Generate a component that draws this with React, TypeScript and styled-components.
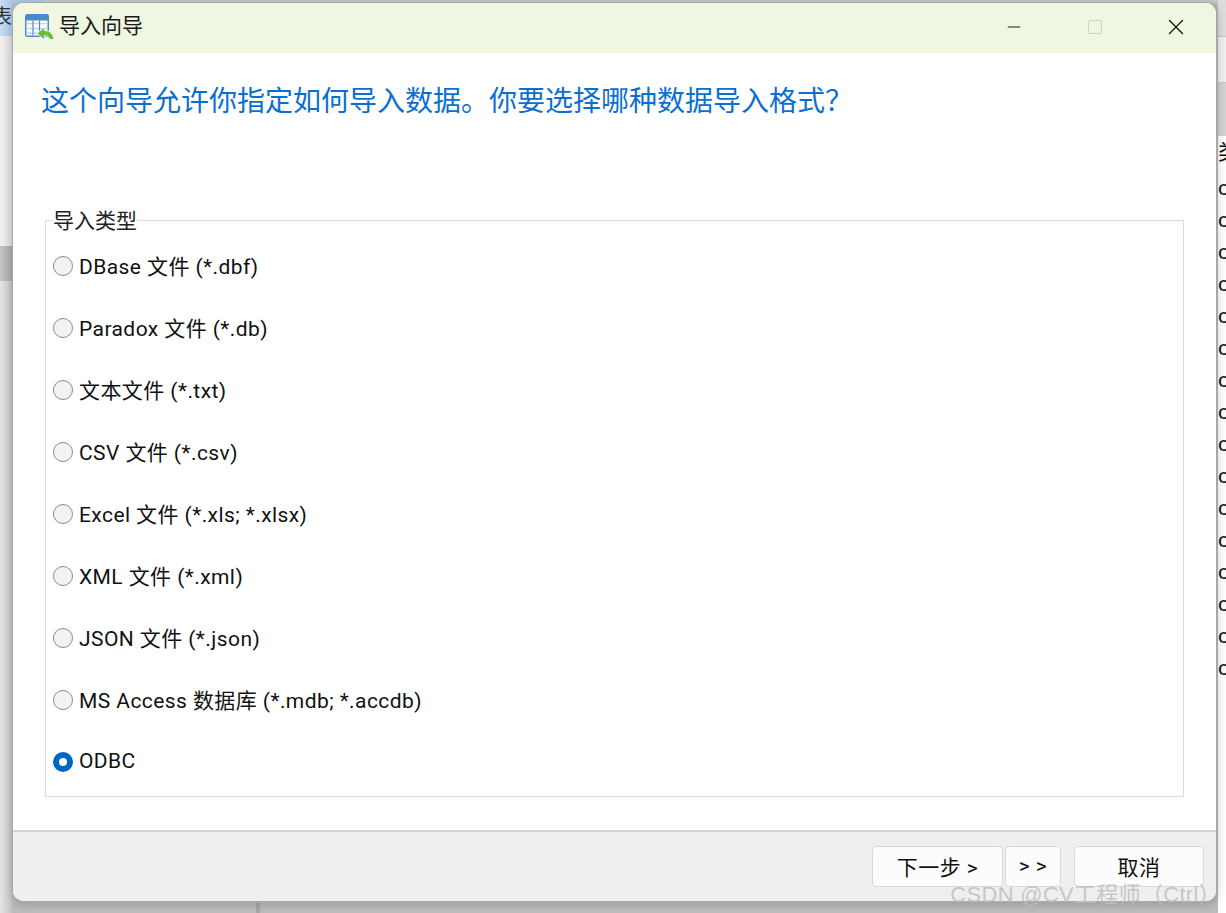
import styled, { createGlobalStyle } from "styled-components";
import { X, Minus } from "lucide-react";

const GlobalStyle = createGlobalStyle`
  html, body {
    margin: 0;
    padding: 0;
    height: 100%;
    overflow: hidden;
  }
  body {
    font-family: Roboto, "Noto Sans CJK SC", sans-serif;
    background: #d4d4d4;
  }
`;

const Desktop = styled.div`
  position: relative;
  width: 1226px;
  height: 913px;
  display: grid;
  grid-template-columns: 12px 1206px 8px;
  overflow: hidden;
  background:
    linear-gradient(#a8a8a8, #a8a8a8) 256px bottom / 4px 10px no-repeat,
    linear-gradient(90deg, #a9c9e8 44px, #c8c8c8 44px) top / 100% 3px no-repeat,
    #bcbcbc;
`;

const LeftStrip = styled.div`
  display: flex;
  flex-direction: column;
  background: #e2e2e2;
`;

const LeftTab = styled.div`
  height: 36px;
  background: linear-gradient(90deg, #c6dcf2, #a9c9e8);
  font-size: 20px;
  color: #333;
  overflow: hidden;
  direction: rtl;
  line-height: 34px;
`;

const LeftGap = styled.div`
  height: 210px;
  background: linear-gradient(90deg, #f0f0f0, #dcdcdc);
`;

const LeftSelected = styled.div`
  height: 35px;
  background: linear-gradient(90deg, #c4c4c4, #a8a8a8);
`;

const LeftRest = styled.div`
  flex: 1;
  background: linear-gradient(90deg, #e4e4e4, #c4c4c4);
`;

const Window = styled.div`
  position: relative;
  z-index: 1;
  height: 901px;
  margin-top: 2px;
  box-sizing: border-box;
  display: flex;
  flex-direction: column;
  background: #fff;
  border-style: solid;
  border-color: #a8a8a8;
  border-width: 1px 2px 2px 1px;
  border-radius: 12px;
  overflow: hidden;
  box-shadow: 0 2px 8px rgba(0, 0, 0, 0.18);
`;

const TitleBar = styled.div`
  height: 50px;
  flex-shrink: 0;
  display: flex;
  align-items: center;
  background: #eff7e0;
  padding: 0 0 3px 12px;
  box-sizing: border-box;
`;

const TitleText = styled.div`
  margin: 0 0 5px 4px;
  font-size: 21px;
  color: #1a1a1a;
`;

const WindowControls = styled.div`
  margin-left: auto;
  display: flex;
  align-items: center;
`;

const ControlButton = styled.div`
  width: 81px;
  height: 47px;
  display: flex;
  align-items: center;
  justify-content: center;
  color: #1c1c1c;
`;

const MaxBox = styled.div`
  width: 12px;
  height: 12px;
  border: 1.5px solid #ccd4c0;
  border-radius: 2px;
`;

const Body = styled.div`
  flex: 1;
  padding: 0 32px;
  display: flex;
  flex-direction: column;
`;

const Heading = styled.h1`
  margin: 29px 0 0 -4px;
  font-size: 28px;
  line-height: 40px;
  font-weight: 400;
  color: #0a6fd0;
  white-space: nowrap;
`;

const GroupBox = styled.fieldset`
  margin: 98px 0 0;
  padding: 0 7px;
  height: 577px;
  box-sizing: border-box;
  border: 1px solid #dcdcdc;
  min-inline-size: 0;
`;

const GroupLegend = styled.div`
  margin-top: -11px;
  height: 22px;
  line-height: 22px;
  font-size: 21px;
  color: #222;
  background: #fff;
  width: 84px;
`;

const OptionList = styled.div`
  display: flex;
  flex-direction: column;
  gap: 30px;
  padding-top: 18px;
`;

const OptionRow = styled.label`
  display: flex;
  align-items: center;
  height: 32px;
  font-size: 21px;
  color: #111;
`;

const OptionLabel = styled.span`
  padding-bottom: 2px;
  letter-spacing: 0.42px;
`;

const RadioDot = styled.span<{ $checked?: boolean }>`
  width: 20px;
  height: 20px;
  box-sizing: border-box;
  border-radius: 50%;
  margin-right: 6px;
  flex-shrink: 0;
  border: ${(p) => (p.$checked ? "6px solid #0067c0" : "1px solid #8a8a8a")};
  background: ${(p) => (p.$checked ? "#fff" : "#f3f3f3")};
`;

const Footer = styled.div`
  height: 71px;
  flex-shrink: 0;
  box-sizing: border-box;
  display: flex;
  justify-content: flex-end;
  align-items: flex-start;
  padding: 14px 12px 0 0;
  background: #efefef;
  border-top: 2px solid #d4d4d4;
`;

const FooterButton = styled.button<{ $w: number; $gap?: number }>`
  width: ${(p) => p.$w}px;
  height: 41px;
  margin-left: ${(p) => p.$gap ?? 0}px;
  font-family: inherit;
  font-size: 21px;
  letter-spacing: 0.5px;
  color: #111;
  background: #fcfcfc;
  border: 1px solid #d8d8d8;
  border-radius: 4px;
  padding: 0 0 2px;
`;

const Watermark = styled.div`
  position: absolute;
  z-index: 2;
  right: 5px;
  top: 882px;
  font-family: "Liberation Sans", "Noto Sans CJK SC", sans-serif;
  font-size: 22px;
  line-height: 26px;
  letter-spacing: 0.3px;
  color: rgba(190, 190, 190, 0.85);
  white-space: nowrap;
`;

const RightStrip = styled.div`
  display: flex;
  flex-direction: column;
  background: #dcdcdc;
  overflow: hidden;
`;

const RightTop = styled.div`
  height: 36px;
  background: #dcdcdc;
  border-bottom: 1px solid #c4c4c4;
`;

const RightMid = styled.div`
  height: 45px;
  background: #efefef;
  border-bottom: 1px solid #c4c4c4;
`;

const RightBand = styled.div`
  height: 53px;
  background: #d2d2d2;
`;

const RightList = styled.div`
  background: #fff;
  flex: 1;
`;

const RightHead = styled.div`
  height: 36px;
  line-height: 32px;
  font-size: 21px;
  color: #111;
  white-space: nowrap;
`;

const RightCell = styled.div`
  height: 32px;
  line-height: 32px;
  font-size: 21px;
  color: #111;
  white-space: nowrap;
`;

const options = [
  "DBase 文件 (*.dbf)",
  "Paradox 文件 (*.db)",
  "文本文件 (*.txt)",
  "CSV 文件 (*.csv)",
  "Excel 文件 (*.xls; *.xlsx)",
  "XML 文件 (*.xml)",
  "JSON 文件 (*.json)",
  "MS Access 数据库 (*.mdb; *.accdb)",
  "ODBC",
];

const rightCells = Array(16).fill("c");

function AppIcon() {
  return (
    <svg width="30" height="30" viewBox="0 0 30 30">
      <rect x="0" y="2" width="24" height="23" rx="2.500" fill="#4a8dc6" />
      <rect x="1.500" y="8.500" width="21" height="15" fill="#fff" />
      <path d="M1.500 11.500h21M1.500 16.500h21M1.500 21h21" stroke="#bcd8f0" strokeWidth="1.600" />
      <path d="M8 8.500v15M14.500 8.500v15" stroke="#4a8dc6" strokeWidth="1.200" />
      <path
        d="M12 21.500l7.500-6.500v3.500c5 0 8.500 3 9.500 9h-4.500c-.5-2.500-2.500-4-5-4v4.500z"
        fill="#6cbc38"
        stroke="#fff"
        strokeWidth="0.800"
      />
    </svg>
  );
}

export default function App() {
  return (
    <>
      <GlobalStyle />
      <Desktop>
        <LeftStrip>
          <LeftTab>表</LeftTab>
          <LeftGap />
          <LeftSelected />
          <LeftRest />
        </LeftStrip>
        <Window>
          <TitleBar>
            <AppIcon />
            <TitleText>导入向导</TitleText>
            <WindowControls>
              <ControlButton>
                <Minus size={20} strokeWidth={1.3} />
              </ControlButton>
              <ControlButton>
                <MaxBox />
              </ControlButton>
              <ControlButton>
                <X size={26} strokeWidth={1.3} />
              </ControlButton>
            </WindowControls>
          </TitleBar>
          <Body>
            <Heading>这个向导允许你指定如何导入数据。你要选择哪种数据导入格式？</Heading>
            <GroupBox>
              <GroupLegend>导入类型</GroupLegend>
              <OptionList>
                {options.map((o) => (
                  <OptionRow key={o}>
                    <RadioDot $checked={o === "ODBC"} />
                    <OptionLabel>{o}</OptionLabel>
                  </OptionRow>
                ))}
              </OptionList>
            </GroupBox>
          </Body>
          <Footer>
            <FooterButton $w={131}>下一步 &gt;</FooterButton>
            <FooterButton $w={56} $gap={2}>&gt; &gt;</FooterButton>
            <FooterButton $w={130} $gap={13}>取消</FooterButton>
          </Footer>
        </Window>
        <RightStrip>
          <RightTop />
          <RightMid />
          <RightBand />
          <RightList>
            <RightHead>类</RightHead>
            {rightCells.map((c, i) => (
              <RightCell key={i}>{c}</RightCell>
            ))}
          </RightList>
        </RightStrip>
        <Watermark>CSDN @CV工程师（Ctrl）</Watermark>
      </Desktop>
    </>
  );
}
